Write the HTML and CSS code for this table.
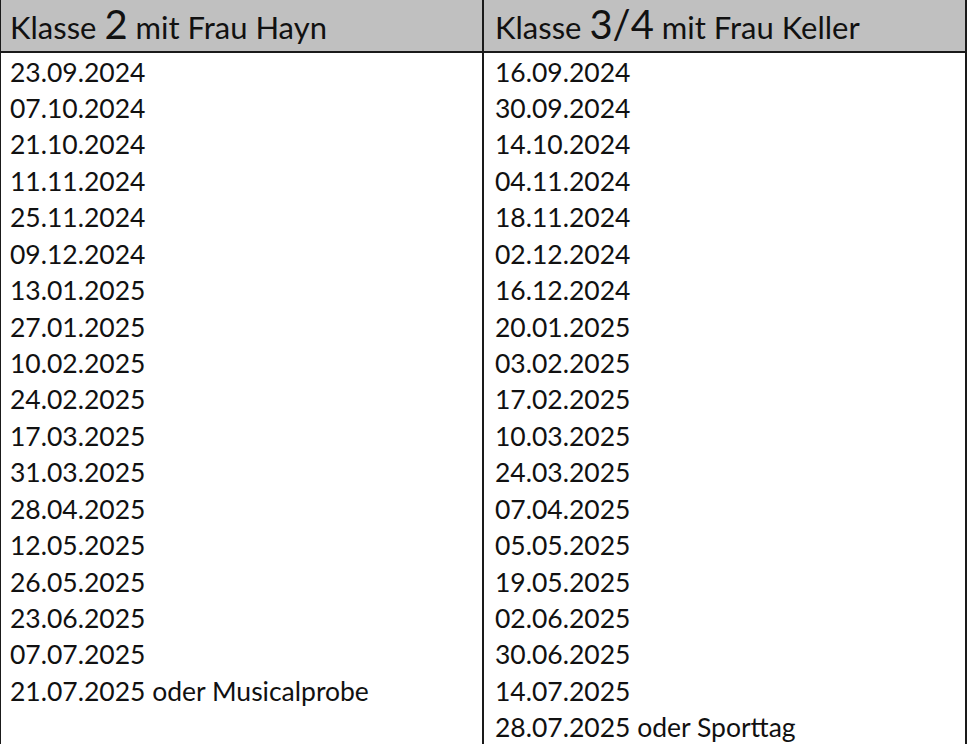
FILE: index.html
```html
<!DOCTYPE html>
<html lang="de">
<head>
    <meta charset="UTF-8">
    <meta name="viewport" content="width=device-width, initial-scale=1.0">
    <title>Termine</title>
    <link rel="stylesheet" href="styles.css">
</head>
<body>
    <table class="plan">
        <thead>
            <tr>
                <th>Klasse <span class="big">2</span> mit Frau Hayn</th>
                <th>Klasse <span class="big">3/4</span> mit Frau Keller</th>
            </tr>
        </thead>
        <tbody>
            <tr><td>23.09.2024</td><td>16.09.2024</td></tr>
            <tr><td>07.10.2024</td><td>30.09.2024</td></tr>
            <tr><td>21.10.2024</td><td>14.10.2024</td></tr>
            <tr><td>11.11.2024</td><td>04.11.2024</td></tr>
            <tr><td>25.11.2024</td><td>18.11.2024</td></tr>
            <tr><td>09.12.2024</td><td>02.12.2024</td></tr>
            <tr><td>13.01.2025</td><td>16.12.2024</td></tr>
            <tr><td>27.01.2025</td><td>20.01.2025</td></tr>
            <tr><td>10.02.2025</td><td>03.02.2025</td></tr>
            <tr><td>24.02.2025</td><td>17.02.2025</td></tr>
            <tr><td>17.03.2025</td><td>10.03.2025</td></tr>
            <tr><td>31.03.2025</td><td>24.03.2025</td></tr>
            <tr><td>28.04.2025</td><td>07.04.2025</td></tr>
            <tr><td>12.05.2025</td><td>05.05.2025</td></tr>
            <tr><td>26.05.2025</td><td>19.05.2025</td></tr>
            <tr><td>23.06.2025</td><td>02.06.2025</td></tr>
            <tr><td>07.07.2025</td><td>30.06.2025</td></tr>
            <tr><td>21.07.2025 oder Musicalprobe</td><td>14.07.2025</td></tr>
            <tr><td></td><td>28.07.2025 oder Sporttag</td></tr>
        </tbody>
    </table>
</body>
</html>
```

FILE: styles.css
```css
* {margin: 0; padding: 0; box-sizing: border-box;}
body {background: #fff; font-family: Lato, "Open Sans", sans-serif; color: #111; overflow: hidden;}

.plan {border-collapse: collapse; width: 968px; margin-left: -1px; table-layout: fixed;}
.plan th, .plan td {width: 50%; text-align: left; vertical-align: middle; border-left: 2px solid #1a1a1a; border-right: 2px solid #1a1a1a; white-space: nowrap;}

.plan th {background: #c0c0c0; height: 52px; font-weight: normal; font-size: 31px; line-height: 1; border-bottom: 2px solid #1a1a1a; padding: 2px 0 2px 9px;}
.plan th .big {font-size: 40px; line-height: 0.8;}
.plan th:last-child {padding-left: 11px;}

.plan td {height: 36.45px; font-size: 26.5px; line-height: 1; padding-top: 3px;}
.plan td:first-child {padding-left: 9px;}
.plan td:last-child {padding-left: 11px;}
```
